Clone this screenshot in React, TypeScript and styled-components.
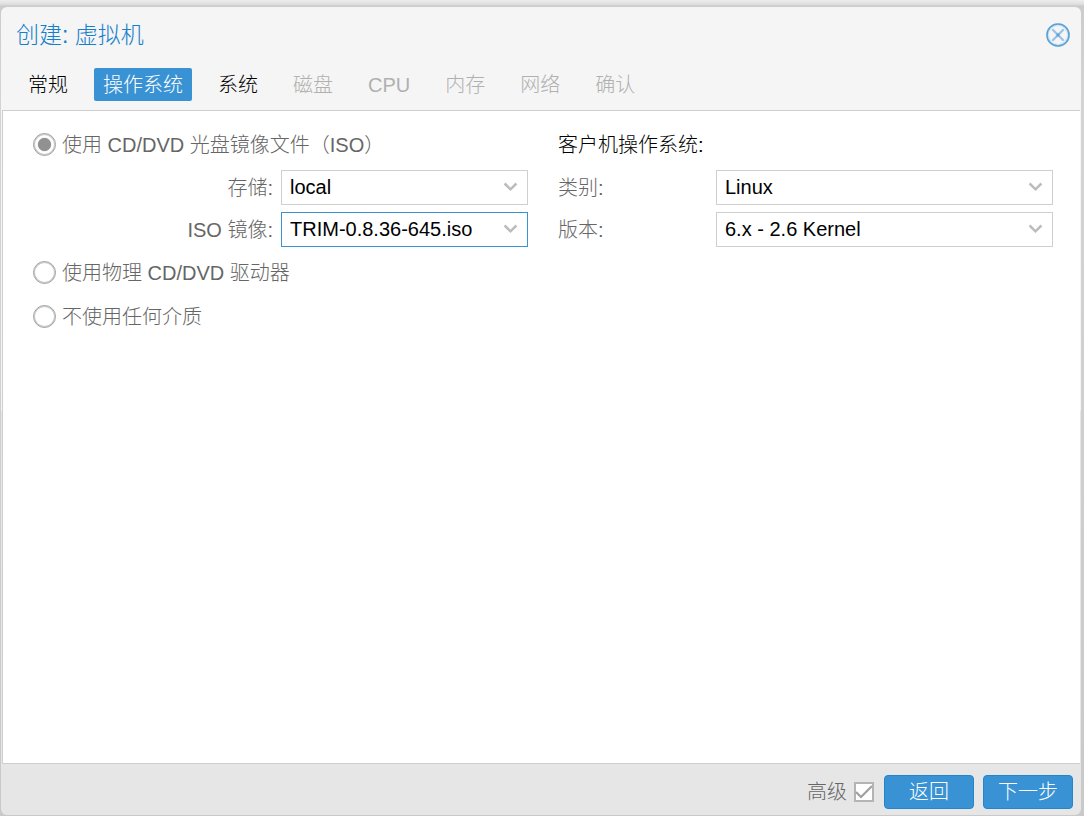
import React, { useState } from 'react';
import styled, { createGlobalStyle, css } from 'styled-components';

const GlobalStyle = createGlobalStyle`
  *, *::before, *::after { box-sizing: border-box; }
  body {
    margin: 0;
    font-family: "Liberation Sans", "Noto Sans CJK SC", sans-serif;
    font-size: 20px;
    font-weight: 300;
    line-height: 24px;
    color: #666;
  }
  button, select, input { font: inherit; margin: 0; }
`;

const Backdrop = styled.div`
  display: flex;
  min-height: 100vh;
  padding: 7px 3px 1px 1px;
  background: linear-gradient(#ededed 0, #e0e0e0 4px, #cccccc 6px, #d4d4d4 100px, #c9c9c9 100%);
`;

const Window = styled.form`
  flex: 1;
  display: flex;
  flex-direction: column;
  padding: 0 1px;
  border-radius: 6px;
  background: linear-gradient(#f5f5f5 50%, #e6e6e6 50%);
  overflow: hidden;
`;

const Header = styled.header`
  display: flex;
  align-items: center;
  justify-content: space-between;
  height: 56px;
  padding: 0 10px 0 14px;
`;

const Title = styled.h1`
  margin: 0;
  font-size: 23px;
  font-weight: 300;
  line-height: 28px;
  color: #157fcc;
`;

const CloseButton = styled.button`
  display: flex;
  padding: 0;
  border: 0;
  background: none;
  cursor: pointer;
`;

const TabBar = styled.nav`
  display: flex;
  gap: 17px;
  padding: 5px 17px 9px;
`;

const Tab = styled.button<{ $active?: boolean }>`
  height: 33px;
  padding: 0 9px;
  border: 0;
  border-radius: 2px;
  background: none;
  color: #000;
  cursor: pointer;
  &:disabled { color: #b0b0b0; cursor: default; }
  ${p => p.$active && css`
    background: #3892d3;
    color: #fff;
  `}
`;

const Body = styled.main`
  flex: 1;
  display: grid;
  grid-template-columns: 1fr 1fr;
  gap: 30px;
  padding: 15px 27px 15px 30px;
  border: 1px solid #cfcfcf;
  border-right: 0;
  background: #fff;
`;

const Column = styled.section`
  display: flex;
  flex-direction: column;
  gap: 7px;
`;

const RadioRow = styled.label`
  display: flex;
  align-items: center;
  gap: 6px;
  height: 37px;
`;

const Radio = styled.input`
  appearance: none;
  display: grid;
  place-items: center;
  width: 23px;
  height: 23px;
  border: 1px solid #a0a0a0;
  border-radius: 50%;
  background: #fff;
  box-shadow: inset 0 0 0 1px #c4c4c4;
  &:checked::before {
    content: "";
    width: 13px;
    height: 13px;
    border-radius: 50%;
    background: #919191;
    box-shadow: 0 0 1px #919191;
  }
`;

const Heading = styled.h2`
  display: flex;
  align-items: center;
  height: 37px;
  margin: 0;
  font-size: 20px;
  font-weight: 300;
  color: #000;
`;

const FieldRow = styled.div`
  display: flex;
  align-items: center;
  gap: 8px;
`;

const FieldLabel = styled.label<{ $wide?: boolean }>`
  width: ${p => (p.$wide ? 240 : 150)}px;
  text-align: ${p => (p.$wide ? 'right' : 'left')};
`;

const SelectBox = styled.div`
  position: relative;
  flex: 1;
  display: flex;
  svg {
    position: absolute;
    right: 10px;
    top: 11px;
    pointer-events: none;
  }
`;

const Select = styled.select<{ $focused?: boolean }>`
  appearance: none;
  width: 100%;
  height: 35px;
  padding: 0 32px 2px 8px;
  border: 1px solid ${p => (p.$focused ? '#3892d3' : '#cfcfcf')};
  border-radius: 0;
  background: #fff;
  color: #000;
  outline: 0;
`;

const Footer = styled.footer`
  display: flex;
  align-items: center;
  justify-content: flex-end;
  gap: 9px;
  height: 51px;
  padding: 4px 7px 0;
`;

const CheckLabel = styled.label`
  display: flex;
  align-items: center;
  gap: 7px;
  margin-right: 1px;
`;

const CheckWrap = styled.span`
  position: relative;
  display: flex;
  svg { position: absolute; inset: 0; pointer-events: none; }
`;

const Checkbox = styled.input`
  appearance: none;
  width: 20px;
  height: 20px;
  border: 2px solid #b4b4b4;
  background: #fff;
  & + svg { visibility: hidden; }
  &:checked + svg { visibility: visible; }
`;

const ActionButton = styled.button`
  width: 90px;
  height: 34px;
  padding: 0;
  border: 1px solid #2386cd;
  border-radius: 4px;
  background: #3892d3;
  color: #fff;
  cursor: pointer;
`;

type FieldProps = { id: string; label: string; value: string; wide?: boolean; focused?: boolean };

const Field = ({ id, label, value, wide, focused }: FieldProps) => (
  <FieldRow>
    <FieldLabel htmlFor={id} $wide={wide}>{label}</FieldLabel>
    <SelectBox>
      <Select id={id} defaultValue={value} $focused={focused}>
        <option>{value}</option>
      </Select>
      <svg width="14" height="12" viewBox="0 0 14 12" fill="none" stroke="#bcbcbc" strokeWidth="2.5">
        <path d="M.6 2.5 6.5 8.3 12.4 2.5" />
      </svg>
    </SelectBox>
  </FieldRow>
);

const TABS = ['常规', '操作系统', '系统', '磁盘', 'CPU', '内存', '网络', '确认'];
const REACHABLE = 3;

export default function App() {
  const [tab, setTab] = useState(1);
  const [media, setMedia] = useState('iso');

  const radio = (id: string, text: string) => (
    <RadioRow>
      <Radio type="radio" name="media" checked={media === id} onChange={() => setMedia(id)} />
      {text}
    </RadioRow>
  );

  return (
    <>
      <GlobalStyle />
      <Backdrop>
        <Window onSubmit={e => e.preventDefault()}>
          <Header>
            <Title>创建: 虚拟机</Title>
            <CloseButton type="button" aria-label="关闭">
              <svg width="24" height="24" viewBox="0 0 24 24" fill="none" strokeLinecap="round">
                <circle cx="12" cy="12" r="10.5" stroke="#d3e5f4" strokeWidth="3" />
                <circle cx="12" cy="12" r="11" stroke="#5aa2d6" strokeWidth="1.6" />
                <path d="M7 7 17 17M17 7 7 17" stroke="#9cc4e8" strokeWidth="2.4" />
                <path d="M11 11 13 13M13 11 11 13" stroke="#5aa2d6" strokeWidth="1.4" />
              </svg>
            </CloseButton>
          </Header>
          <TabBar>
            {TABS.map((name, i) => (
              <Tab key={name} type="button" $active={i === tab} disabled={i >= REACHABLE} onClick={() => setTab(i)}>
                {name}
              </Tab>
            ))}
          </TabBar>
          <Body>
            <Column>
              {radio('iso', '使用 CD/DVD 光盘镜像文件（ISO）')}
              <Field id="storage" label="存储:" value="local" wide />
              <Field id="image" label="ISO 镜像:" value="TRIM-0.8.36-645.iso" wide focused />
              {radio('physical', '使用物理 CD/DVD 驱动器')}
              {radio('none', '不使用任何介质')}
            </Column>
            <Column>
              <Heading>客户机操作系统:</Heading>
              <Field id="ostype" label="类别:" value="Linux" />
              <Field id="version" label="版本:" value="6.x - 2.6 Kernel" />
            </Column>
          </Body>
          <Footer>
            <CheckLabel>
              高级
              <CheckWrap>
                <Checkbox type="checkbox" defaultChecked />
                <svg width="20" height="20" viewBox="0 0 20 20" fill="none" stroke="#a0a0a0" strokeWidth="2.2">
                  <path d="M2 10 7 15 18 4" />
                </svg>
              </CheckWrap>
            </CheckLabel>
            <ActionButton type="button">返回</ActionButton>
            <ActionButton type="submit">下一步</ActionButton>
          </Footer>
        </Window>
      </Backdrop>
    </>
  );
}
